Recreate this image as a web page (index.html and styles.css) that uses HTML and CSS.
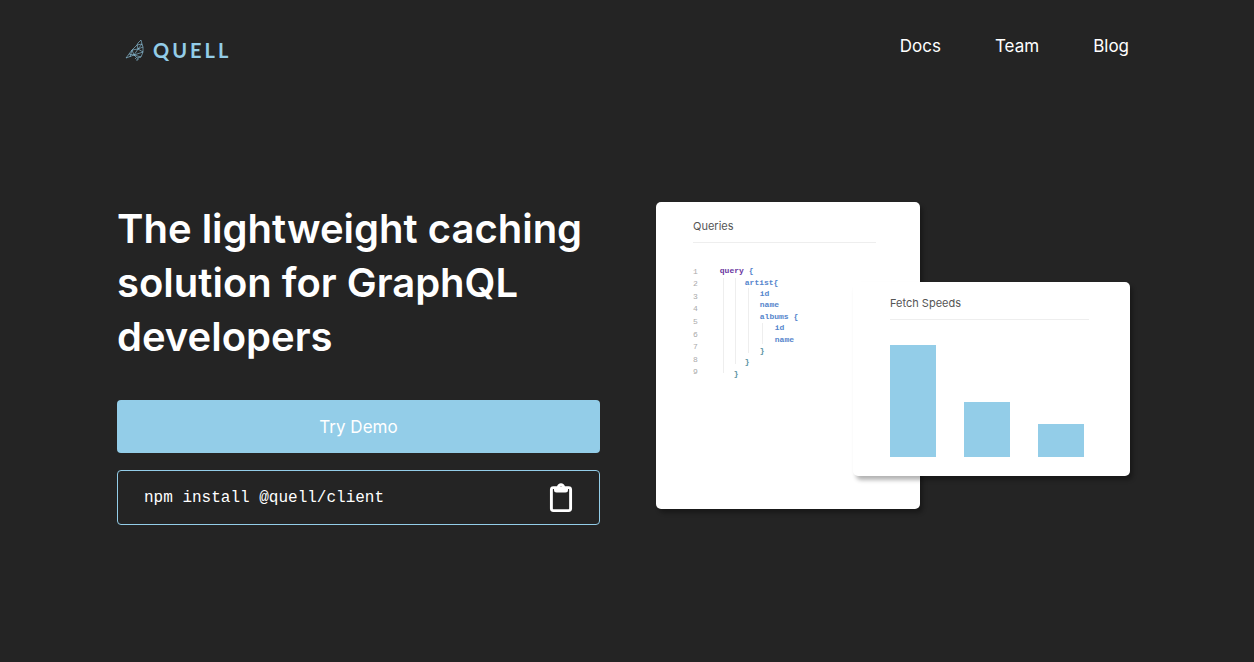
FILE: index.html
```html
<!DOCTYPE html>
<html lang="en">
<head>
  <meta charset="utf-8">
  <meta name="viewport" content="width=device-width, initial-scale=1">
  <title>Quell</title>
  <link rel="stylesheet" href="styles.css">
</head>
<body>
  <header class="header">
    <a class="logo" href="#">
      <svg class="logo-bird" viewBox="0 0 20 22" aria-hidden="true">
        <path d="M1 19 L7 11 L12 6 L13 4 L16 1 L17 5 L18 8 L18 13 L16 18 L12 19 L9 16 L1 19 M12 6 L17 5 L13 10 L7 11 M13 10 L18 13 L9 16 L7 11 M13 10 L9 16 L4 15 M12 6 L13 10 L18 8 M9 16 L16 18 M5 18 L7 11 M11 19 L10 20 M13 19 L13 21 L11 21"/>
      </svg>
      <span class="logo-name">QUELL</span>
    </a>
    <nav class="nav">
      <a href="#docs">Docs</a>
      <a href="#team">Team</a>
      <a href="#blog">Blog</a>
    </nav>
  </header>

  <main class="hero">
    <section class="intro">
      <h1 class="title">The lightweight caching solution for GraphQL developers</h1>
      <button class="demo" type="button">Try Demo</button>
      <div class="install">
        <code class="command">npm install @quell/client</code>
        <button class="copy" type="button" aria-label="Copy command">
          <svg class="copy-icon" viewBox="0 0 24 30" aria-hidden="true">
            <rect x="2.400" y="4.600" width="19.200" height="23" rx="2" fill="none" stroke="currentColor" stroke-width="2.900"/>
            <path fill="currentColor" fill-rule="evenodd" d="M5 4 H8 C8.500 -1 15.500 -1 16 4 H19 V7 Q19 9.500 16.500 9.500 H7.500 Q5 9.500 5 7 Z M13.300 4.200 A1.300 1.300 0 1 0 10.700 4.200 A1.300 1.300 0 1 0 13.300 4.200 Z"/>
          </svg>
        </button>
      </div>
    </section>

    <section class="preview">
      <article class="card queries">
        <h2 class="card-title">Queries</h2>
        <div class="editor">
          <div class="numbers"><span>1</span><span>2</span><span>3</span><span>4</span><span>5</span><span>6</span><span>7</span><span>8</span><span>9</span></div>
          <div class="code">
            <svg class="guides" viewBox="0 0 60 114" aria-hidden="true">
              <path d="M3.500 13V108M15.500 13V99M28.500 23V88M42.500 58V79"/>
            </svg>
            <span><b>query</b> {</span>
            <span class="in-25">artist{</span>
            <span class="in-40">id</span>
            <span class="in-40">name</span>
            <span class="in-40">albums {</span>
            <span class="in-55">id</span>
            <span class="in-55">name</span>
            <span class="in-40 close">}</span>
            <span class="in-25 close">}</span>
            <span class="in-14 close">}</span>
          </div>
        </div>
      </article>
      <article class="card speeds">
        <h2 class="card-title">Fetch Speeds</h2>
        <div class="chart">
          <div class="bar bar-first"></div>
          <div class="bar bar-second"></div>
          <div class="bar bar-third"></div>
        </div>
      </article>
    </section>
  </main>
</body>
</html>
```

FILE: styles.css
```css
* {
  box-sizing: border-box;
}

body {
  margin: 0;
  background: #242424;
  color: #fff;
  font-family: Inter, "Liberation Sans", sans-serif;
}

button {
  border: 0;
  font: inherit;
  color: inherit;
  cursor: pointer;
}

.header,
.hero {
  width: calc(100% - 40px);
  max-width: 1020px;
  margin: 0 auto;
}

.header {
  display: flex;
  justify-content: space-between;
  align-items: flex-start;
  padding: 34px 8px 0;
  height: 100px;
}

.logo {
  display: flex;
  align-items: center;
  gap: 8px;
  padding-top: 4px;
  color: #93cde8;
  text-decoration: none;
}

.logo-bird {
  width: 20px;
  height: 22px;
  fill: none;
  stroke: currentColor;
  stroke-width: 0.6;
}

.logo-name {
  font-family: Lato, sans-serif;
  font-size: 20px;
  line-height: 24px;
  font-weight: 700;
  letter-spacing: 3px;
}

.nav {
  display: flex;
  gap: 54px;
}

.nav a {
  color: inherit;
  font-size: 17px;
  line-height: 24px;
  text-decoration: none;
}

.hero {
  display: grid;
  grid-template-columns: 483fr 481fr;
  gap: 56px;
  padding: 102px 0 60px;
}

.title {
  margin: 0 0 36px;
  font-size: 40px;
  line-height: 54px;
  font-weight: 600;
}

.demo {
  display: block;
  width: 100%;
  height: 53px;
  margin-bottom: 17px;
  border-radius: 4px;
  background: #93cde8;
  font-size: 17px;
}

.install {
  display: flex;
  align-items: center;
  justify-content: space-between;
  height: 55px;
  padding: 0 26px;
  border: 1px solid #93cde8;
  border-radius: 4px;
}

.command {
  font-family: "Courier New", "Liberation Mono", monospace;
  font-size: 16px;
}

.copy {
  padding: 0;
  background: none;
}

.copy-icon {
  display: block;
  width: 24px;
  height: 30px;
}

/* The two cards share the middle column and the middle row. */
.preview {
  display: grid;
  grid-template-columns: 197fr 67fr 210fr 7fr;
  grid-template-rows: 80px 194px 33px;
}

.card {
  border-radius: 5px;
  background: #fff;
  color: #555;
  box-shadow: 3px 4px 4px rgba(0, 0, 0, 0.3);
}

.queries {
  grid-area: 1 / 1 / 4 / 3;
  padding: 17px 44px 0 37px;
}

.speeds {
  grid-area: 2 / 2 / 3 / 4;
  padding: 14px 41px 0 37px;
}

.card-title {
  margin: 0;
  padding-bottom: 8px;
  border-bottom: 1px solid #eee;
  font-size: 11px;
  line-height: 15px;
  font-weight: 400;
}

.editor {
  display: flex;
  gap: 22px;
  padding-top: 22px;
  font: 8px "Courier New", "Liberation Mono", monospace;
}

.numbers {
  display: grid;
  grid-auto-rows: 1fr;
  align-items: center;
  height: 113px;
  color: #aaa;
}

.code {
  position: relative;
  display: grid;
  grid-auto-rows: 1fr;
  align-items: center;
  height: 114px;
  color: #5585cc;
  font-weight: 700;
  white-space: pre;
}

.code b {
  color: #6a35a0;
}

.guides {
  position: absolute;
  width: 60px;
  height: 114px;
  fill: none;
  stroke: #eee;
}

.in-14 {
  padding-left: 14px;
}

.in-25 {
  padding-left: 25px;
}

.in-40 {
  padding-left: 40px;
}

.in-55 {
  padding-left: 55px;
}

.close {
  color: #5a93a3;
}

.chart {
  display: flex;
  align-items: flex-end;
  gap: 28px;
  height: 137px;
}

.bar {
  width: 46px;
  background: #93cde8;
}

.bar-first {
  height: 112px;
}

.bar-second {
  height: 55px;
}

.bar-third {
  height: 33px;
}

@media (max-width: 900px) {
  .hero {
    grid-template-columns: 1fr;
    padding-top: 40px;
  }
}
```
